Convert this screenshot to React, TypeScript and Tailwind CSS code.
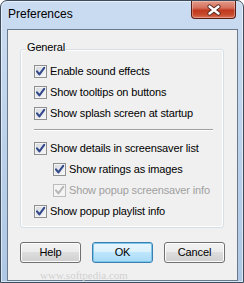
import React from "react";

type Item = { label: string; indent?: boolean; disabled?: boolean };

const top: Item[] = [
  { label: "Enable sound effects" },
  { label: "Show tooltips on buttons" },
  { label: "Show splash screen at startup" },
];

const bottom: Item[] = [
  { label: "Show details in screensaver list" },
  { label: "Show ratings as images", indent: true },
  { label: "Show popup screensaver info", indent: true, disabled: true },
  { label: "Show popup playlist info" },
];

function Check({ disabled }: { disabled?: boolean }) {
  return (
    <span
      className={
        "flex h-[13px] w-[13px] shrink-0 items-center justify-center border " +
        (disabled
          ? "border-[#bcbcbc] bg-[#f4f4f4]"
          : "border-[#8e8f8f] bg-gradient-to-br from-[#d4d8de] to-[#f8f8f8] shadow-[inset_0_0_0_1px_#f4f4f4]")
      }
    >
      <svg width="11" height="11" viewBox="0 0 11 11">
        <path
          d="M2 5.4 L4.4 8.4 L9.2 1.8"
          fill="none"
          stroke={disabled ? "#b8b8b8" : "#34498c"}
          strokeWidth="2.1"
          strokeLinecap="round"
          strokeLinejoin="round"
        />
      </svg>
    </span>
  );
}

function Row({ item }: { item: Item }) {
  return (
    <div className={"flex h-[21px] items-center gap-[3px] " + (item.indent ? "pl-[19px]" : "")}>
      <Check disabled={item.disabled} />
      <span className={item.disabled ? "text-[#a0a0a0]" : "text-black"}>{item.label}</span>
    </div>
  );
}

function Button({ label, primary }: { label: string; primary?: boolean }) {
  return (
    <div
      className={
        "flex h-[21px] w-[61px] items-center justify-center rounded-[3px] border text-black " +
        (primary
          ? "border-[#3c7fb1] bg-[linear-gradient(#eaf6fd_0%,#d9f0fc_50%,#bee6fd_50%,#a7d9f5_100%)] shadow-[inset_0_0_0_1px_#7cc6ec]"
          : "border-[#707070] bg-[linear-gradient(#f2f2f2_0%,#ebebeb_50%,#dddddd_50%,#cfcfcf_100%)] shadow-[inset_0_0_0_1px_#fcfcfc]")
      }
    >
      {label}
    </div>
  );
}

export default function App() {
  return (
    <div className="relative flex h-[283px] w-[244px] flex-col overflow-hidden rounded-t-[7px] border border-[#3d4c5c] bg-gradient-to-b from-[#cadcf1] to-[#aec7e4] font-['Liberation_Sans',Arial,sans-serif] text-[11px] tracking-[-0.15px] shadow-[inset_0_0_0_1px_rgba(255,255,255,0.55)]">
      <div className="flex h-[28px] items-start justify-between pl-[7px] pr-[7px]">
        <span className="mt-[6px] text-[12px] leading-[15px] tracking-normal text-black">Preferences</span>
        <div className="flex h-[18px] w-[45px] items-center justify-center rounded-b-[4px] border border-t-0 border-[#5a1e16] bg-[linear-gradient(#e39a88_0%,#d4715c_40%,#c0391f_55%,#c84a2c_80%,#d9735a_100%)] shadow-[inset_0_0_0_1px_rgba(255,255,255,0.3)]">
          <svg width="16" height="12" viewBox="0 0 16 12">
            <path d="M3.5 2.5 L12.5 9.5 M12.5 2.5 L3.5 9.5" stroke="#5a2a24" strokeWidth="4.2" strokeLinecap="round" />
            <path d="M3.5 2.5 L12.5 9.5 M12.5 2.5 L3.5 9.5" stroke="#ffffff" strokeWidth="2.4" strokeLinecap="round" />
          </svg>
        </div>
      </div>

      <div className="ml-[6px] h-[252px] w-[231px] border border-[#6a7a8c] bg-[#f0f0f0]">
        <div className="relative ml-[12px] mt-[19px] w-[204px] rounded-[3px] border border-[#d5dfe5] pb-[5px] pl-[13px] pt-[11px] shadow-[inset_0_0_0_1px_#ffffff]">
          <span className="absolute left-[5px] top-[-9px] bg-[#f0f0f0] px-[1px] leading-[13px] text-black">General</span>
          {top.map((it, i) => (
            <Row key={i} item={it} />
          ))}
          <div className="mt-[5px] w-[179px] border-t border-b border-t-[#a0a0a0] border-b-white" />
          <div className="mt-[7px]">
            {bottom.map((it, i) => (
              <Row key={i} item={it} />
            ))}
          </div>
        </div>

        <div className="ml-[12px] mt-[14px] flex gap-[11px]">
          <Button label="Help" />
          <Button label="OK" primary />
          <Button label="Cancel" />
        </div>

        <div className="pointer-events-none mt-[4px] pl-[32px] font-['Liberation_Serif',serif] text-[11px] tracking-normal text-[#d0d0d0]">
          www.softpedia.com
        </div>
      </div>
    </div>
  );
}
